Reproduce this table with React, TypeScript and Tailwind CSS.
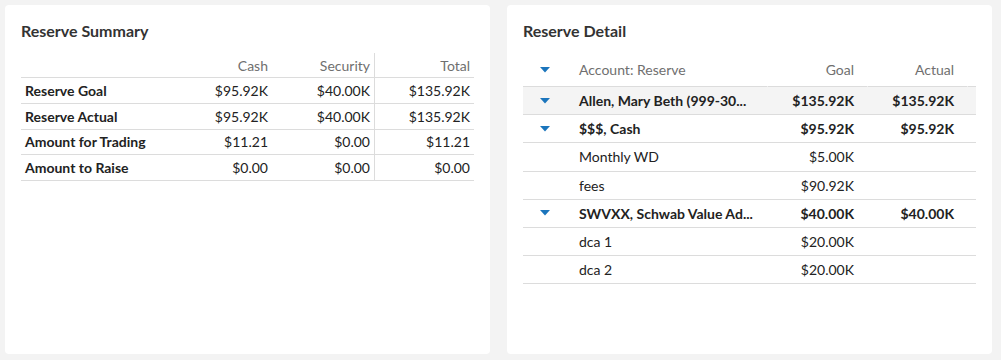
import React from "react"

const Caret = () => (
  <svg width="10" height="6" viewBox="0 0 10 6" className="inline-block">
    <path d="M0 0 L10 0 L5 5.5 Z" fill="#1b75bc" />
  </svg>
)

const summaryRows = [
  { label: "Reserve Goal", cash: "$95.92K", security: "$40.00K", total: "$135.92K" },
  { label: "Reserve Actual", cash: "$95.92K", security: "$40.00K", total: "$135.92K" },
  { label: "Amount for Trading", cash: "$11.21", security: "$0.00", total: "$11.21" },
  { label: "Amount to Raise", cash: "$0.00", security: "$0.00", total: "$0.00" },
]

type DetailRow = { name: string; goal: string; actual?: string; group?: boolean; highlight?: boolean }

const detailRows: DetailRow[] = [
  { name: "Allen, Mary Beth (999-30...", goal: "$135.92K", actual: "$135.92K", group: true, highlight: true },
  { name: "$$$, Cash", goal: "$95.92K", actual: "$95.92K", group: true },
  { name: "Monthly WD", goal: "$5.00K" },
  { name: "fees", goal: "$90.92K" },
  { name: "SWVXX, Schwab Value Ad...", goal: "$40.00K", actual: "$40.00K", group: true },
  { name: "dca 1", goal: "$20.00K" },
  { name: "dca 2", goal: "$20.00K" },
]

const ReserveSummary = () => (
  <div className="w-[485px] h-[349px] bg-white rounded-[4px] p-4">
    <h2 className="text-[16px] leading-5 font-bold text-[#333]">Reserve Summary</h2>
    <div className="mt-3 text-[14px] text-[#222]">
      <div className="flex h-[25px] border-b border-[#dcdcdc] items-center text-[#6f6f6f]">
        <div className="w-[150px]" />
        <div className="w-[101px] text-right pr-1">Cash</div>
        <div className="w-[102px] text-right pr-1 h-full flex items-center justify-end">Security</div>
        <div className="flex-1 h-full border-l border-[#dcdcdc] flex items-center justify-end pr-1">Total</div>
      </div>
      {summaryRows.map((r) => (
        <div key={r.label} className="flex h-[25.75px] border-b border-[#dcdcdc] items-center">
          <div className="w-[150px] pl-1 font-bold">{r.label}</div>
          <div className="w-[101px] text-right pr-1">{r.cash}</div>
          <div className="w-[102px] text-right pr-1">{r.security}</div>
          <div className="flex-1 h-full border-l border-[#dcdcdc] flex items-center justify-end pr-1">{r.total}</div>
        </div>
      ))}
    </div>
  </div>
)

const ReserveDetail = () => (
  <div className="w-[485px] h-[349px] bg-white rounded-[4px] p-4">
    <h2 className="text-[16px] leading-5 font-bold text-[#333]">Reserve Detail</h2>
    <div className="mt-3 text-[14px] text-[#222]">
      <div className="flex h-[34px] items-stretch text-[#6f6f6f]">
        <div className="w-[44px] border-b border-[#dcdcdc] flex items-center justify-center">
          <Caret />
        </div>
        <div className="w-[200px] border-b border-[#dcdcdc] flex items-center pl-3">Account: Reserve</div>
        <div className="w-[100px] border-b border-l border-l-white border-b-[#dcdcdc] flex items-center justify-end pr-[13px]">Goal</div>
        <div className="w-[100px] border-b border-l border-l-white border-b-[#dcdcdc] flex items-center justify-end pr-[13px]">Actual</div>
        <div className="flex-1 border-b border-l border-l-white border-b-[#dcdcdc]" />
      </div>
      {detailRows.map((r) => (
        <div
          key={r.name}
          className={`flex h-[28.2px] border-b border-[#dcdcdc] items-center ${r.highlight ? "bg-[#f4f4f4]" : ""} ${r.group ? "font-bold" : ""}`}
        >
          <div className="w-[44px] flex items-center justify-center">{r.group && <Caret />}</div>
          <div className="w-[200px] pl-3 whitespace-nowrap">{r.name}</div>
          <div className="w-[100px] text-right pr-[13px]">{r.goal}</div>
          <div className="w-[100px] text-right pr-[13px]">{r.actual}</div>
        </div>
      ))}
    </div>
  </div>
)

export default function App() {
  return (
    <div className="w-[1001px] h-[360px] bg-[#f3f3f3] pt-[5px] pl-[5px] flex gap-[17px] font-['Lato',sans-serif]">
      <ReserveSummary />
      <ReserveDetail />
    </div>
  )
}
